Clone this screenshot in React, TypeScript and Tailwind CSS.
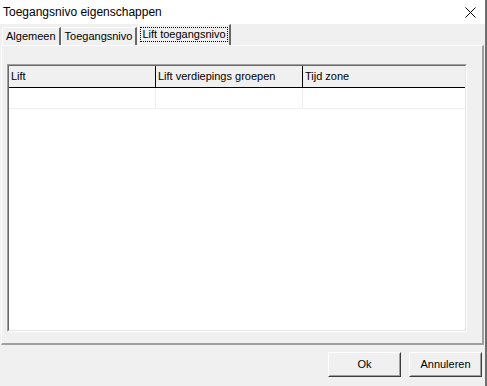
import React from 'react';

const font = { fontFamily: '"Liberation Sans", Arial, sans-serif' };

const Tab: React.FC<{ label: string; selected?: boolean }> = ({ label, selected }) => {
    if (selected) {
        return (
            <div className="h-[21px] ml-[1px] bg-[#f0f0f0] border-t border-l border-white border-r-2 border-r-[#696969] px-[2px] pt-[3px] text-[11px] text-black relative z-10">
                <span className="block px-[1px] leading-[13px] outline outline-1 outline-dotted outline-black">{label}</span>
            </div>
        );
    }
    return (
        <div className="h-[18px] bg-[#f0f0f0] border-t border-l border-white border-r-2 border-r-[#696969] px-[3px] pt-[2px] text-[11px] leading-[13px] text-black">
            {label}
        </div>
    );
};

const Button: React.FC<{ label: string }> = ({ label }) => (
    <div className="w-[73px] h-[25px] border border-t-white border-l-white border-r-[#3c3c3c] border-b-[#3c3c3c]">
        <div className="w-full h-full border border-t-[#f0f0f0] border-l-[#f0f0f0] border-r-[#a0a0a0] border-b-[#a0a0a0] flex items-center justify-center text-[11px] text-black">
            {label}
        </div>
    </div>
);

export default function App() {
    const columns = [
        { title: 'Lift', width: 'w-[147px]' },
        { title: 'Lift verdiepings groepen', width: 'w-[147px]' },
        { title: 'Tijd zone', width: 'flex-1' },
    ];

    return (
        <div style={font} className="w-[487px] h-[386px] bg-[#f0f0f0] border-r-2 border-[#6e6e6e] flex flex-col overflow-hidden select-none">
            {/* Title bar */}
            <div className="h-[24px] bg-white flex items-center justify-between pl-[3px] pr-[8px] shrink-0">
                <span className="text-[12px] text-black">Toegangsnivo eigenschappen</span>
                <svg width="11" height="11" viewBox="0 0 11 11" className="mr-[1px]">
                    <path d="M0.5 0.5 L10.5 10.5 M10.5 0.5 L0.5 10.5" stroke="#000" strokeWidth="1" fill="none" />
                </svg>
            </div>

            {/* Tabs */}
            <div className="h-[21px] flex items-end pl-[2px] shrink-0">
                <Tab label="Algemeen" />
                <Tab label="Toegangsnivo" />
                <Tab label="Lift toegangsnivo" selected />
            </div>

            {/* Tab panel */}
            <div className="ml-[1px] w-[483px] h-[300px] shrink-0 border-t border-l border-white border-r-2 border-b-2 border-r-[#a0a0a0] border-b-[#a0a0a0] pt-[18px] pl-[5px]">
                {/* List view */}
                <div className="w-[460px] h-[268px] border border-t-[#a0a0a0] border-l-[#a0a0a0] border-r-white border-b-white">
                    <div className="w-full h-full border border-t-[#696969] border-l-[#696969] border-r-[#e3e3e3] border-b-[#e3e3e3] bg-white flex flex-col">
                        <div className="h-[22px] flex bg-[#f0f0f0] border-b border-black">
                            {columns.map((c, i) => (
                                <div
                                    key={c.title}
                                    className={`${c.width} h-full flex items-center pl-[2px] text-[11px] text-black ${i < 2 ? 'border-r border-black' : ''}`}
                                >
                                    {c.title}
                                </div>
                            ))}
                        </div>
                        <div className="h-[21px] flex border-b border-[#f0f0f0]">
                            {columns.map((c, i) => (
                                <div key={c.title} className={`${c.width} h-full ${i < 2 ? 'border-r border-[#f0f0f0]' : ''}`} />
                            ))}
                        </div>
                    </div>
                </div>
            </div>

            {/* Footer */}
            <div className="flex justify-end gap-[8px] pt-[7px] pr-[3px]">
                <Button label="Ok" />
                <Button label="Annuleren" />
            </div>
        </div>
    );
}
